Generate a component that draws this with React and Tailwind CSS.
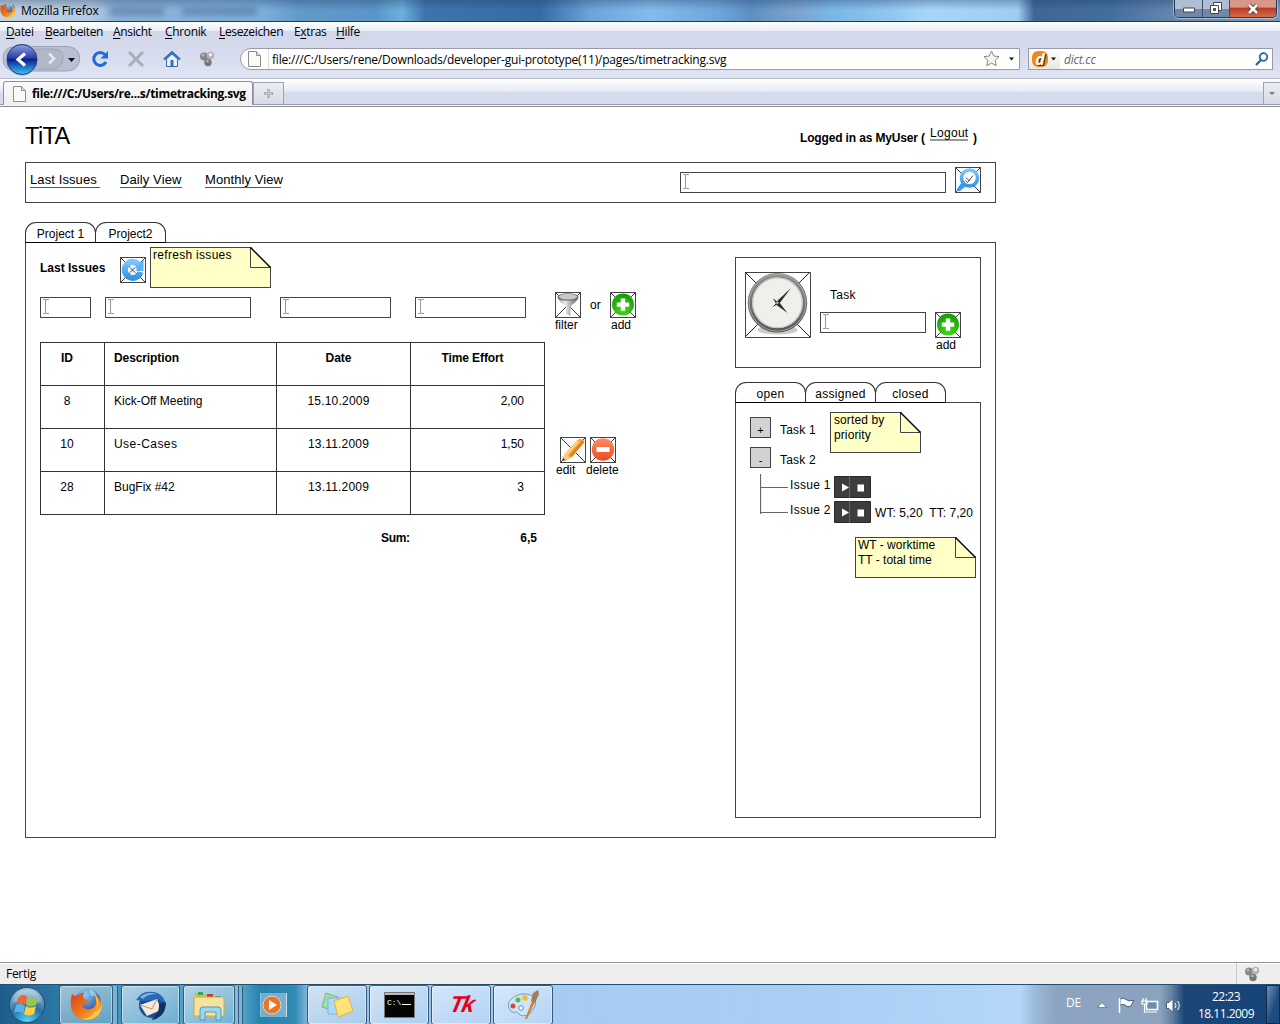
import React from "react";

const ui = "font-['Open_Sans','Noto_Sans',sans-serif]";

function Note({ children, className = "" }) {
  return (
    <div className={`relative h-[41px] border border-[#444] bg-[#ffffc8] text-[12px] leading-[15px] ${className}`}>
      {children}
      <svg className="absolute -top-px -right-px" width="21" height="21" viewBox="0 0 21 21">
        <path d="M1 0H21V20Z" fill="#fff" />
        <path d="M.5 .5V20.500H21" fill="none" stroke="#444" />
        <path d="M.5 .5L20.500 20.500" stroke="#000" strokeWidth="1.400" />
      </svg>
    </div>
  );
}

function Field({ className = "" }) {
  return (
    <div className={`h-[21px] shrink-0 border border-[#444] pt-px pl-[2px] ${className}`}>
      <svg width="6" height="15" viewBox="0 0 6 15" fill="none" stroke="#999">
        <path d="M0 .5H2L3 1L4 .5H6M2.5 1V14M0 14.5H2L3 14L4 14.5H6" />
      </svg>
    </div>
  );
}

function IconBox({ children }) {
  return (
    <svg className="block shrink-0" width="26" height="26" viewBox="0 0 26 26">
      <path d="M.5 .5H25.5V25.5H.5Z" fill="#fff" stroke="#444" />
      <path d="M.5 .5L25.5 25.5M25.5 .5L.5 25.5" stroke="#222" strokeWidth=".9" />
      {children}
    </svg>
  );
}

function PlusIcon() {
  return (
    <IconBox>
      <circle cx="13" cy="12.5" r="11" fill="url(#green)" />
      <path d="M10.8 6.5h4.4v4h4v4.2h-4v4h-4.4v-4h-4v-4.2h4z" fill="#fff" />
    </IconBox>
  );
}

function Captioned({ icon, label, labelClass = "ml-px", className = "" }) {
  return (
    <div className={`flex w-[26px] shrink-0 flex-col items-start text-[12px] leading-[15px] ${className}`}>
      {icon}
      <span className={`whitespace-nowrap ${labelClass}`}>{label}</span>
    </div>
  );
}

function Tab({ children }) {
  return (
    <div className="relative z-10 -mr-px h-[21px] w-[71px] rounded-t-[11px] border border-[#333] border-b-black bg-white pt-[4px] text-center text-[12px] leading-[15px]">
      {children}
    </div>
  );
}

function Defs() {
  return (
    <svg className="absolute" width="0" height="0">
      <defs>
        <radialGradient id="green" cx=".5" cy=".8" r=".8"><stop offset="0" stopColor="#45d816" /><stop offset="1" stopColor="#129a08" /></radialGradient>
        <linearGradient id="red" x2="0" y2="1"><stop offset="0" stopColor="#ff8a68" /><stop offset="1" stopColor="#ee4a22" /></linearGradient>
        <linearGradient id="sky" x2="0" y2="1"><stop offset="0" stopColor="#7cc4fa" /><stop offset="1" stopColor="#3395e8" /></linearGradient>
        <linearGradient id="metal"><stop offset="0" stopColor="#777" /><stop offset=".35" stopColor="#eee" /><stop offset="1" stopColor="#555" /></linearGradient>
        <linearGradient id="rim" x2="0" y2="1"><stop offset="0" stopColor="#8b8f8b" /><stop offset="1" stopColor="#555a56" /></linearGradient>
        <linearGradient id="back" x2="0" y2="1"><stop offset="0" stopColor="#8fa0e0" /><stop offset=".45" stopColor="#2a3ea8" /><stop offset=".5" stopColor="#0c1c8c" /><stop offset="1" stopColor="#35c8ff" /></linearGradient>
        <radialGradient id="orb" cx=".5" cy="1" r="1"><stop offset="0" stopColor="#58dcff" /><stop offset=".5" stopColor="#236fa8" /><stop offset="1" stopColor="#b4cede" /></radialGradient>
        <linearGradient id="fox" x2="1" y2="1"><stop offset="0" stopColor="#d8421a" /><stop offset=".55" stopColor="#f07a1c" /><stop offset="1" stopColor="#ffc83a" /></linearGradient>
        <radialGradient id="globe" cx=".4" cy=".2" r=".8"><stop offset="0" stopColor="#8fd0f5" /><stop offset="1" stopColor="#173c8c" /></radialGradient>
      </defs>
    </svg>
  );
}

function Firefox({ size, className = "" }) {
  return (
    <svg className={`shrink-0 ${className}`} width={size} height={size} viewBox="0 0 32 32">
      <circle cx="17" cy="14" r="13" fill="url(#globe)" />
      <path d="M18 2c3-1 7 2 8 5l-5 1z" fill="#bfe4fa" opacity=".6" />
      <path d="M2 5C3 8 5 7 8 7C10 5 13 4 14 5C12 7 12 9 14 11L18 12C17 15 13 15 12 17C13 21 19 22 23 19C26 16 26 10 24 6C30 10 32 17 30 22C27 30 18 33 11 30C1 27-1 16 2 5Z" fill="url(#fox)" />
      <path d="M24 6C29 10 29 20 22 24C27 23 30 19 31 15C31 27 19 33 11 30C20 30 27 24 26 14Z" fill="#ffd44c" opacity=".8" />
    </svg>
  );
}

function PageIcon({ className = "" }) {
  return (
    <svg className={`shrink-0 ${className}`} width="13" height="16" viewBox="0 0 13 16">
      <path d="M.5 .5H8.5L12.5 4.5V15.5H.5Z" fill="#fafafa" stroke="#8d8d8d" />
      <path d="M8.5 .5V4.5H12.5" fill="#ddd" stroke="#8d8d8d" />
    </svg>
  );
}

function Blobs() {
  return (
    <svg width="16" height="16" viewBox="0 0 16 16">
      <circle cx="5" cy="5.5" r="4" fill="#888" /><circle cx="11.5" cy="4.5" r="3.7" fill="#b2b2b2" /><circle cx="9" cy="11.5" r="3.7" fill="#777" />
      <circle cx="4" cy="4" r="1.3" fill="#bbb" /><circle cx="11.5" cy="3.7" r="1.8" fill="#ededed" /><circle cx="8.5" cy="10" r="1.3" fill="#bbb" />
    </svg>
  );
}

function TitleBar() {
  return (
    <header className="flex h-[22px] shrink-0 items-start border-b border-[#26384e] bg-[linear-gradient(180deg,#1c3a6055_0px,#1c3a6000_10px),linear-gradient(90deg,#c4d2e2_0px,#b3cae2_90px,#8fb4da_115px,#7fb0dc_260px,#6199c9_300px,#5b94c6_375px,#6cb0dc_402px,#3e74ac_425px,#376ba4_540px,#6ba3d9_590px,#84bbec_650px,#6ea5d8_720px,#5d8fc2_750px,#7ba2cb_795px,#79b6e6_830px,#8fc4ee_885px,#a8d6f8_930px,#9fcdf2_1018px,#3d6797_1034px,#426e9e_1110px,#6889b0_1180px,#7b98ba_1280px)]">
      <Firefox size={16} className="mt-[2px]" />
      <span className="mt-[3px] ml-[5px] w-[80px] text-[12px] leading-[16px] tracking-[-0.22px] whitespace-nowrap">Mozilla Firefox</span>
      <div className="mt-[8px] ml-[8px] h-[7px] w-[55px] bg-[#38597f]/50 blur-[3px]" />
      <div className="mt-[8px] ml-[18px] h-[7px] w-[75px] bg-[#38597f]/50 blur-[3px]" />
      <div className="mr-[3px] ml-auto flex h-[18px] w-[103px] overflow-hidden rounded-b-[5px] border border-t-0 border-[#253c58] shadow-[0_0_0_1px_#ffffff66]">
        <div className="flex w-[28px] items-center justify-center border-r border-[#3a506c] bg-linear-to-b from-[#aebfd3] from-50% to-[#7189a8] to-55%">
          <svg className="mt-[3px]" width="12" height="6" viewBox="0 0 12 6"><path d="M.5 1h11v4H.5z" fill="#fff" stroke="#445" /></svg>
        </div>
        <div className="flex w-[27px] items-center justify-center border-r border-[#3a506c] bg-linear-to-b from-[#aebfd3] from-50% to-[#7189a8] to-55%">
          <svg width="13" height="13" viewBox="0 0 13 13" fill="#fff" stroke="#445"><path d="M3.5 .5h8v8h-8z" /><path d="M.5 3.5h8v8h-8z" /><path d="M3.5 6.5h2v2h-2z" fill="#667" /></svg>
        </div>
        <div className="flex flex-1 items-center justify-center bg-linear-to-b from-[#d9968b] from-40% via-[#bd3b24] via-50% to-[#d36b4d]">
          <svg width="14" height="12" viewBox="0 0 14 12"><path d="M3 2l8 8M11 2l-8 8" stroke="#533" strokeWidth="4.4" /><path d="M3 2l8 8M11 2l-8 8" stroke="#fff" strokeWidth="2.6" /></svg>
        </div>
      </div>
    </header>
  );
}

function MenuBar() {
  const items = [
    ["", "D", "atei", "w-[39px]"], ["", "B", "earbeiten", "w-[68px]"], ["", "A", "nsicht", "w-[52px]"],
    ["", "C", "hronik", "w-[54px]"], ["", "L", "esezeichen", "w-[75px]"], ["E", "x", "tras", "w-[42px]"], ["", "H", "ilfe", "w-[40px]"],
  ];
  return (
    <nav className="flex h-[22px] shrink-0 bg-linear-to-b from-white from-0% via-[#e9edf6] via-42% to-[#d3d8eb] to-43% pt-[2px] pl-[6px] text-[12px] leading-[16px] tracking-[-0.35px]">
      {items.map(([a, u, b, w]) => (
        <span key={u} className={`${w} shrink-0 whitespace-nowrap`}>{a}<span className="underline underline-offset-2">{u}</span>{b}</span>
      ))}
    </nav>
  );
}

function NavBar() {
  return (
    <div className="flex h-[34px] shrink-0 items-center bg-linear-to-b from-[#d3d8eb] to-[#dfe5f4] pb-[4px]">
      <svg width="82" height="34" viewBox="0 0 82 34" className="mt-[3px] shrink-0">
        <path d="M14 2.500H66C76 2.500 79.500 8 79.500 14.500S76 27 66 27H14Q3 25 3 14.500T14 2.500Z" fill="#bac0d4" stroke="#9ba1b6" />
        <path d="M34 5H55Q63 6 63 14T55 25H34Z" fill="#b2b7c5" stroke="#a0a5b5" />
        <path d="M49 9.500l5 5-5 5" fill="none" stroke="#e4e7ef" strokeWidth="2.600" />
        <circle cx="22" cy="15.500" r="16" fill="#a9b3cf" /><circle cx="22" cy="15.500" r="15" fill="url(#back)" stroke="#2b3979" />
        <path d="M25 9.500l-7 6 7 6" fill="none" stroke="#fff" strokeWidth="3.200" />
        <path d="M68 14h7l-3.500 4z" fill="#111" />
      </svg>
      <svg className="ml-[9px] shrink-0" width="18" height="18" viewBox="0 0 18 18"><path d="M14 4.500A6.500 6.500 0 1 0 15 12" fill="none" stroke="#1b6fd4" strokeWidth="3" /><path d="M17 1V8.500H9.500Z" fill="#1b6fd4" /></svg>
      <svg className="ml-[18px] shrink-0" width="18" height="18" viewBox="0 0 18 18"><path d="M2 2L16 16M16 2L2 16" stroke="#a9adb8" strokeWidth="3" /></svg>
      <svg className="ml-[18px] shrink-0" width="18" height="18" viewBox="0 0 18 18"><path d="M3.500 9V16.500H14.500V9L9 4Z" fill="#e8f2ff" stroke="#3468b8" /><path d="M1 9.500L9 2L17 9.500" fill="none" stroke="#2e65bd" strokeWidth="2" /><path d="M7.500 10h3v6h-3z" fill="#3c6dbd" /></svg>
      <div className="ml-[18px] w-[16px] shrink-0"><Blobs /></div>
      <div className="ml-[25px] flex h-[22px] w-[780px] shrink-0 items-center rounded-l-[11px] border border-[#999ca8] bg-white">
        <PageIcon className="ml-[7px]" />
        <div className="ml-[7px] h-full w-px bg-[#ddd]" />
        <span className="mt-px ml-[3px] text-[12px] leading-[16px] tracking-[-0.21px] whitespace-nowrap">file:///C:/Users/rene/Downloads/developer-gui-prototype(11)/pages/timetracking.svg</span>
        <svg className="mr-[4px] ml-auto" width="32" height="18" viewBox="0 0 32 18"><path d="M8.500 1l2.300 5 5.200.600-3.800 3.700 1 5.400-4.700-2.600-4.700 2.600 1-5.400L1 6.600 6.200 6z" fill="#f4f4f4" stroke="#888" /><path d="M26 7.500h5l-2.500 3z" fill="#111" /></svg>
      </div>
      <div className="ml-[8px] flex h-[22px] w-[245px] shrink-0 items-center border border-[#999ca8] bg-white">
        <div className="flex h-full w-[31px] items-center bg-linear-to-b from-white to-[#e8e8ea] pl-[3px]">
          <span className="flex h-[16px] w-[16px] items-center justify-center rounded-[6px] bg-[#f08a17] text-[16px] leading-[15px] font-bold text-white italic [text-shadow:1px_1px_0_#222]">d</span>
          <svg className="ml-[3px]" width="5" height="4" viewBox="0 0 5 4"><path d="M0 .5h5L2.500 3.500z" fill="#111" /></svg>
        </div>
        <span className="mt-px ml-[4px] text-[12px] tracking-[-0.2px] text-[#666] italic">dict.cc</span>
        <svg className="mr-[3px] ml-auto" width="15" height="15" viewBox="0 0 15 15" fill="none" stroke="#2e6498"><circle cx="9.500" cy="5" r="3.800" strokeWidth="1.800" /><path d="M7 8L2 13" strokeWidth="2.400" /></svg>
      </div>
    </div>
  );
}

function BrowserTabs() {
  return (
    <div className="flex h-[29px] shrink-0 items-end border-b border-[#8c8f98] bg-linear-to-b from-white from-5% via-[#e6eaf5] via-48% to-[#d5daee] to-50% pb-[2px] shadow-[inset_0_1px_0_#b5b9c8,inset_0_-1px_0_#f4f4f4,inset_0_-2px_0_#9b9ea8]">
      <div className="-mb-px ml-[3px] flex h-[24px] w-[250px] items-center rounded-t-[3px] border border-b-0 border-[#8c8f98] bg-linear-to-b from-[#fafafa] to-[#efefef]">
        <PageIcon className="ml-[9px]" />
        <span className="ml-[6px] text-[12px] leading-[16px] font-bold tracking-[-0.31px] whitespace-nowrap">file:///C:/Users/re...s/timetracking.svg</span>
      </div>
      <div className="flex h-[22px] w-[31px] items-center justify-center border border-b-0 border-[#a0a3ae] bg-linear-to-b from-[#eceef4] to-[#d8dbe4]">
        <svg width="9" height="9" viewBox="0 0 9 9"><path d="M4.500 0V9M0 4.500H9" stroke="#8a8d94" strokeWidth="2" /><path d="M4.500 1V8M1 4.500H8" stroke="#eee" strokeWidth=".6" /></svg>
      </div>
      <div className="ml-auto flex h-[22px] w-[17px] items-center justify-center border border-r-0 border-b-0 border-[#a0a3ae] bg-linear-to-b from-[#eceef4] to-[#d8dbe4]">
        <svg width="6" height="4" viewBox="0 0 6 4"><path d="M0 0h6L3 3z" fill="#777" /></svg>
      </div>
    </div>
  );
}

const rows = [
  ["8", "Kick-Off Meeting", "15.10.2009", "2,00"],
  ["10", "Use-Cases", "13.11.2009", "1,50"],
  ["28", "BugFix #42", "13.11.2009", "3"],
];

function IssueTable() {
  const cell = "border border-[#333] pt-[8px] align-top";
  return (
    <table className="w-[505px] table-fixed border-collapse text-[12px] leading-[15px]">
      <colgroup><col className="w-[64px]" /><col className="w-[172px]" /><col className="w-[134px]" /><col className="w-[134px]" /></colgroup>
      <thead>
        <tr className="h-[43px]">
          <th className={`${cell} pr-[11px]`}>ID</th>
          <th className={`${cell} pl-[9px] text-left tracking-[-0.1px]`}>Description</th>
          <th className={`${cell} pr-[10px]`}>Date</th>
          <th className={`${cell} pr-[10px] tracking-[-0.1px]`}>Time Effort</th>
        </tr>
      </thead>
      <tbody>
        {rows.map(([id, text, date, effort]) => (
          <tr key={id} className="h-[43px]">
            <td className={`${cell} pr-[11px] text-center`}>{id}</td>
            <td className={`${cell} pl-[9px] text-left ${id === "10" ? "tracking-[0.45px]" : ""}`}>{text}</td>
            <td className={`${cell} pr-[10px] text-center tracking-[0.2px]`}>{date}</td>
            <td className={`${cell} pr-[20px] text-right`}>{effort}</td>
          </tr>
        ))}
      </tbody>
    </table>
  );
}

function Issues() {
  return (
    <section className="w-[709px] pt-[4px] pl-[14px]">
      <div className="flex h-[41px] items-start">
        <h2 className="mt-[14px] w-[80px] text-[12px] leading-[15px] font-bold whitespace-nowrap">Last Issues</h2>
        <div className="mt-[10px]">
          <IconBox>
            <path d="M19.500 8.500A8 8 0 1 0 20.500 15" fill="none" stroke="url(#sky)" strokeWidth="6" />
            <path d="M23.500 3V14H13Z" fill="#5db1f5" />
            <circle cx="12.500" cy="13" r="4" fill="#e8f3fc" />
            <path d="M10 10.500l5 5M15 10.500l-5 5" stroke="#222" strokeWidth=".8" />
          </IconBox>
        </div>
        <Note className="ml-[4px] w-[121px] pl-[2px] tracking-[0.3px]">refresh issues</Note>
      </div>
      <div className="mt-[4px] flex h-[50px] items-start">
        <Field className="mt-[5px] w-[51px]" />
        <Field className="mt-[5px] ml-[14px] w-[146px]" />
        <Field className="mt-[5px] ml-[29px] w-[111px]" />
        <Field className="mt-[5px] ml-[24px] w-[111px]" />
        <Captioned
          className="ml-[29px]"
          label="filter"
          labelClass=""
          icon={<IconBox><path d="M2.500 5C3 10 11 12 11 16V22L15.500 24V16C15.500 12 23 10 23.500 5Z" fill="url(#metal)" /><ellipse cx="13" cy="5" rx="10.500" ry="3.800" fill="#777" /><ellipse cx="13" cy="4.800" rx="9" ry="2.800" fill="#c9c9c9" /></IconBox>}
        />
        <span className="mt-[6px] ml-[9px] w-[20px] text-[12px] leading-[15px]">or</span>
        <Captioned label="add" icon={<PlusIcon />} />
      </div>
      <div className="flex">
        <IssueTable />
        <Captioned
          className="mt-[95px] ml-[15px]"
          label="edit"
          labelClass="-ml-[4px]"
          icon={<IconBox><path d="M2 24L4.500 17L17 3.500Q22 0 24.500 5L12 20L5 24Z" fill="#f5a33b" /><path d="M4.500 17L17 3.500L20 4L7 19Z" fill="#ffd37b" /><path d="M12 20L24.500 5L22.500 3L9.500 18Z" fill="#e28425" /><path d="M2 24L4.500 17L10.500 21Z" fill="#f1cfa4" /><path d="M2 24L3 21L5 23Z" fill="#222" /></IconBox>}
        />
        <Captioned
          className="mt-[95px] ml-[4px]"
          label="delete"
          labelClass="-ml-[4px]"
          icon={<IconBox><circle cx="13" cy="12.500" r="11.200" fill="url(#red)" /><path d="M6.500 10H19.500V15H6.500Z" fill="#fff" /></IconBox>}
        />
      </div>
      <div className="mt-[16px] flex w-[497px] justify-between pl-[341px] text-[12px] leading-[15px] font-bold">
        <span className="tracking-[-0.3px]">Sum:</span><span>6,5</span>
      </div>
    </section>
  );
}

function Player() {
  return (
    <svg className="ml-[2px] shrink-0" width="37" height="22" viewBox="0 0 37 22">
      <path d="M.5 .5H36.5V21.500H.5Z" fill="#3d3d3d" stroke="#2a2a2a" /><path d="M15.500 0V22" stroke="#666" />
      <path d="M8 7.500L15 11.500L8 15.500ZM23.500 8.500h6.500v7h-6.500z" fill="#fff" />
    </svg>
  );
}

function TaskTree() {
  const toggle = "flex h-[21px] w-[21px] items-end justify-center border border-[#444] bg-[#d2d2d2] text-[11px] leading-[14px]";
  return (
    <div className="-mt-px h-[416px] w-[246px] border border-[#444] pl-[14px] text-[12px] leading-[15px]">
      <div className="flex h-[60px]">
        <div className="w-[80px] pt-[14px]">
          <div className="flex items-center"><span className={toggle}>+</span><span className="mt-[5px] ml-[9px] tracking-[0.2px]">Task 1</span></div>
          <div className="mt-[9px] flex items-center"><span className={toggle}>-</span><span className="mt-[5px] ml-[9px] tracking-[0.2px]">Task 2</span></div>
        </div>
        <Note className="mt-[9px] w-[91px] pl-[3px] tracking-[0.1px]">sorted by<br />priority</Note>
      </div>
      <div className="mt-[11px] flex h-[50px]">
        <svg className="ml-[10px] shrink-0" width="29" height="41" viewBox="0 0 29 41"><path d="M.5 0V40M0 13.500H28M0 38.500H28" fill="none" stroke="#666" strokeWidth="1.200" /></svg>
        <div className="flex flex-col gap-[3px] pt-[2px]">
          <div className="flex"><span className="mt-[2px] ml-px w-[42px] whitespace-nowrap tracking-[0.3px]">Issue 1</span><Player /></div>
          <div className="flex"><span className="mt-[2px] ml-px w-[42px] whitespace-nowrap tracking-[0.3px]">Issue 2</span><Player /><span className="mt-[5px] ml-[4px] whitespace-pre tracking-[0.05px]">WT: 5,20  TT: 7,20</span></div>
        </div>
      </div>
      <Note className="mt-[13px] ml-[105px] w-[121px] pl-[2px]">WT - worktime<br />TT - total time</Note>
    </div>
  );
}

function TaskPanel() {
  return (
    <aside className="pt-[14px]">
      <div className="flex h-[111px] w-[246px] border border-[#444] pt-[14px] pl-[9px]">
        <svg className="shrink-0" width="66" height="66" viewBox="1 1 66 66">
          <path d="M1.500 1.500H66.500V66.500H1.500Z" fill="#fff" stroke="#444" />
          <path d="M1 1L66 66M66 1L1 66" stroke="#222" />
          <ellipse cx="33.500" cy="59" rx="20" ry="4.500" fill="#999" opacity=".5" />
          <circle cx="33.500" cy="31.800" r="27.500" fill="#eff0ec" stroke="url(#rim)" strokeWidth="4.500" />
          <circle cx="33.500" cy="31.800" r="28.300" fill="none" stroke="#b5b8b4" strokeWidth=".8" />
          <circle cx="33.500" cy="31.800" r="24.800" fill="none" stroke="#c4c6c2" strokeWidth="1.200" />
          <path d="M31 34.500L32.500 30.500L47 17L35.500 32.500Z" fill="#333" />
          <path d="M30 29L35 31L43.500 42L33 34.500Z" fill="#333" />
          <path d="M29.500 28L37 35.500M37 28L29.500 35.500" stroke="#222" />
          <circle cx="33.300" cy="31.800" r="1.300" fill="#bbb" />
        </svg>
        <div className="ml-[9px] flex w-[106px] flex-col pt-[16px] text-[12px] leading-[15px]">
          <span className="ml-[10px] tracking-[0.3px]">Task</span>
          <Field className="mt-[9px] w-[106px]" />
        </div>
        <Captioned className="mt-[40px] ml-[9px]" label="add" icon={<PlusIcon />} />
      </div>
      <div className="mt-[14px] flex tracking-[0.3px]"><Tab>open</Tab><Tab>assigned</Tab><Tab>closed</Tab></div>
      <TaskTree />
    </aside>
  );
}

function Prototype() {
  const link = "border-b border-[#555] leading-[15px] whitespace-nowrap";
  return (
    <main className="h-[855px] shrink-0 bg-white pl-[25px] font-['Liberation_Sans',Arial,sans-serif] text-black">
      <div className="flex h-[55px]">
        <h1 className="mt-[16px] w-[775px] text-[23.500px] leading-[26px] tracking-[-0.6px]">TiTA</h1>
        <div className="flex text-[12px]">
          <b className="mt-[24px] w-[130px] leading-[15px] tracking-[-0.15px] whitespace-nowrap">Logged in as MyUser (</b>
          <span className="mt-[19px] h-[15px] w-[38px] border-b-2 border-[#999] leading-[15px] tracking-[0.3px]">Logout</span>
          <b className="mt-[24px] ml-[5px] leading-[15px]">)</b>
        </div>
      </div>
      <div className="flex h-[41px] w-[971px] items-start border border-[#444] pl-[4px] text-[13px]">
        <div className="mt-[9px] flex w-[650px]">
          <span className={`${link} w-[70px] tracking-[0.1px]`}>Last Issues</span>
          <span className={`${link} ml-[20px] w-[62px] tracking-[0.1px]`}>Daily View</span>
          <span className={`${link} ml-[23px] w-[76px] tracking-[0.08px]`}>Monthly View</span>
        </div>
        <Field className="mt-[9px] w-[266px]" />
        <div className="mt-[4px] ml-[9px]">
          <IconBox>
            <path d="M2 22L7 15L11 19L5 24Q2 25 2 22Z" fill="#3d9bee" />
            <circle cx="14.500" cy="11" r="8" fill="#fff" stroke="url(#sky)" strokeWidth="3.600" />
            <path d="M10.500 13.500l2 2L18 8.500M11 10.500L14.500 14" fill="none" stroke="#222" strokeWidth=".8" />
          </IconBox>
        </div>
      </div>
      <div className="mt-[19px] flex"><Tab>Project 1</Tab><Tab>Project2</Tab></div>
      <div className="-mt-px flex h-[596px] w-[971px] border border-[#444]">
        <Issues />
        <TaskPanel />
      </div>
    </main>
  );
}

function TaskButton({ children, width = "w-[60px]", className = "" }) {
  return (
    <div className={`flex h-[40px] shrink-0 items-center justify-center rounded-[3px] border border-[#35597d] bg-linear-to-br from-[#ffffff90] to-[#ffffff28] shadow-[inset_0_0_0_1px_#ffffff70] ${width} ${className}`}>
      {children}
    </div>
  );
}

function Taskbar() {
  return (
    <footer className="flex h-[40px] shrink-0 items-center border-t border-[#234f70] bg-[linear-gradient(90deg,#1c5d8c_0px,#2d78a5_60px,#4b9ac4_130px,#58a6ca_240px,#2583b0_260px,#3189b5_295px,#94bfe6_310px,#a5cbf3_500px,#aacdf4_800px,#b3d6fa_1020px,#9bb9d9_1036px,#8ba4c1_1056px,#8ba3bf_1160px,#63809f_1172px,#1b4777_1184px,#164478_1270px)]">
      <svg className="ml-[8px] shrink-0" width="38" height="38" viewBox="0 0 38 38">
        <circle cx="19" cy="19" r="17.500" fill="url(#orb)" stroke="#1c4b70" />
        <path d="M5 16Q8 4 19 4T33 16Q19 20 5 16Z" fill="#fff" opacity=".25" />
        <path d="M11 11Q15 7 19 11L17 19Q13 15 8 18Z" fill="#ef6532" /><path d="M20 11Q24 15 30 11L28 19Q22 22 18 19Z" fill="#9bc93c" />
        <path d="M8 19Q13 16 17 20L15 28Q11 24 6 27Z" fill="#56b4e8" /><path d="M18 20Q22 23 28 20L26 28Q20 31 16 28Z" fill="#ffcf3e" />
      </svg>
      <TaskButton className="ml-[13px]" width="w-[54px]"><Firefox size={33} /></TaskButton>
      <div className="h-[38px] w-[5px] shrink-0 border-r border-[#35597d] bg-white/30" />
      <TaskButton className="ml-[3px]" width="w-[59px]">
        <svg width="32" height="32" viewBox="0 0 32 32"><circle cx="17" cy="16" r="13" fill="#1c4d94" /><path d="M1 11Q7 1 18 3Q29 5 31 16Q25 9 18 11L8 12Z" fill="#2b69b6" /><path d="M5 8Q12 2 22 5Q12 5 8 10Z" fill="#7db3e6" /><path d="M5 16L22 10L26 21L12 27Z" fill="#f4e8d8" /><path d="M5 16L17 20L22 10" fill="none" stroke="#b89c80" /><path d="M31 13Q31 29 16 31Q25 24 24 15Z" fill="#142f66" /></svg>
      </TaskButton>
      <TaskButton className="ml-[3px]" width="w-[52px]">
        <svg width="36" height="34" viewBox="0 0 36 34"><path d="M4 5h9l3 3h15v21H4z" fill="#d9b95e" /><path d="M7 4h5v3H7z" fill="#3ca54a" /><path d="M16 6h6v3h-6z" fill="#c9392b" /><path d="M25 8h5v3h-5z" fill="#2f81c9" /><path d="M3 9H33V28H3Z" fill="#f5e39d" stroke="#cda94a" /><path d="M9 32V22Q9 19 12 19H27Q30 19 30 22V32H25V24H14V32Z" fill="#9dd6ef" stroke="#4d9cc4" /></svg>
      </TaskButton>
      <div className="h-[38px] w-[4px] shrink-0 border-r border-[#35597d] bg-white/25" /><div className="h-[38px] w-[4px] shrink-0 border-r border-[#35597d] bg-white/20" />
      <div className="ml-[18px] flex h-[24px] w-[26px] shrink-0 items-center border-r border-white/60 bg-white/35 shadow-[-1px_0_0_#ffffff80]">
        <svg width="24" height="24" viewBox="0 0 24 24"><circle cx="11" cy="12" r="9" fill="#ee7421" stroke="#d2dbe3" /><path d="M8 7L16 12L8 17Z" fill="#fff" /></svg>
      </div>
      <TaskButton className="ml-[20px]">
        <svg width="34" height="28" viewBox="0 0 34 28"><path d="M6 2L18 6L14 20L2 16Z" fill="#a1dfa1" stroke="#73ba7b" /><path d="M8 7H22V23H8Z" fill="#a9d9fa" stroke="#76b5de" /><path d="M14 10L28 5L33 20L18 26Z" fill="#ffe174" stroke="#d9b842" /></svg>
      </TaskButton>
      <TaskButton className="ml-[2px]">
        <svg width="31" height="26" viewBox="0 0 31 26"><path d="M.5 .5h30v25H.5z" fill="#050505" stroke="#777" /><path d="M1 1h29v2H1z" fill="#bbb" /><text x="3" y="13" fill="#fff" fontSize="8" fontFamily="Liberation Mono">C:\</text><path d="M18 12.500h9" stroke="#fff" /></svg>
      </TaskButton>
      <TaskButton className="ml-[2px]"><span className="-skew-x-12 font-['Liberation_Sans',sans-serif] text-[23px] leading-none font-bold tracking-[-2px] text-[#e60019] italic">Tk</span></TaskButton>
      <TaskButton className="ml-[2px]">
        <svg width="34" height="34" viewBox="0 0 34 34"><path d="M17 6C28 5 32 13 28 20C25 27 17 30 13 26C11 22 8 26 5 23C-2 16 6 7 17 6Z" fill="#cfe6f8" stroke="#6b9cc5" /><circle cx="7" cy="18" r="2.500" fill="#df4335" /><circle cx="12" cy="12" r="2.500" fill="#63b34b" /><circle cx="19" cy="10" r="2.800" fill="#f4bc35" /><circle cx="15" cy="20" r="2.300" fill="#fff" stroke="#508ac0" /><path d="M19 31L26 13L29 14L21 31Z" fill="#d48435" /><path d="M25 13L27 5L32 2L33 6L29 15Z" fill="#a77c58" /></svg>
      </TaskButton>
      <div className="ml-auto flex h-full shrink-0 items-center text-white">
        <span className="mb-[4px] w-[31px] text-[12px] tracking-[-0.3px]">DE</span>
        <svg width="90" height="22" viewBox="0 0 90 22" className="mt-px shrink-0">
          <path d="M.5 13.500H9.500L5 8.500Z" fill="#fff" stroke="#567" strokeWidth=".7" />
          <path d="M22.500 4V19M23 5Q27 3 30 6Q33 8 37 6L34 12Q31 14 28 11Q25 10 23 11Z" fill="#fff" stroke="#465d78" /><path d="M22.500 4V19" stroke="#fff" strokeWidth="1.500" />
          <path d="M49.500 7.500H60.500V15.500H49.500Z" fill="#718dad" stroke="#fff" strokeWidth="1.500" /><path d="M51 18H60M46 4V8M49 4V8M45 7H50V10H45ZM47.500 10V18H51" stroke="#fff" fill="none" strokeWidth="1.200" />
          <path d="M69.500 8.500H72L76 4.500V18.500L72 14.500H69.500Z" fill="#fff" stroke="#465d78" /><path d="M78 9Q80 11.500 78 14M80.500 7Q84 11.500 80.500 16" fill="none" stroke="#fff" />
        </svg>
        <div className="ml-[7px] w-[64px] text-center text-[12px] leading-[17px] tracking-[-0.5px]">22:23<br />18.11.2009</div>
        <div className="ml-[8px] h-full w-[14px] border border-[#0b2a50] bg-linear-to-br from-[#6f91b6] to-[#1e4b7f] to-60%" />
      </div>
    </footer>
  );
}

export default function App() {
  return (
    <div className={`flex h-[1024px] w-[1280px] flex-col overflow-hidden text-black ${ui}`}>
      <Defs />
      <TitleBar />
      <MenuBar />
      <NavBar />
      <BrowserTabs />
      <Prototype />
      <div className="flex h-[22px] shrink-0 items-center border-t border-[#909090] bg-[#f0eded] pl-[6px] text-[12px] tracking-[-0.3px] shadow-[inset_0_1px_0_#fff]">
        Fertig
        <div className="ml-auto flex h-full w-[44px] items-center border-l border-[#ccc] pl-[7px]"><Blobs /></div>
      </div>
      <Taskbar />
    </div>
  );
}
